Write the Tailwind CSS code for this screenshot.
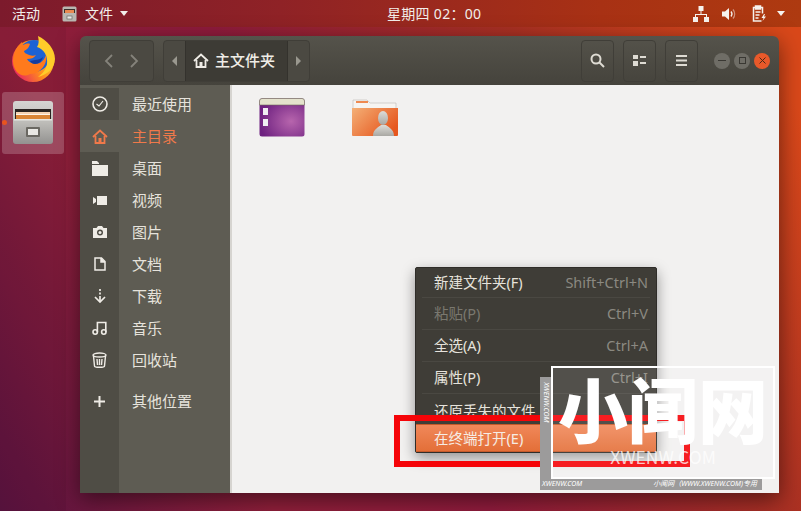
<!DOCTYPE html>
<html lang="zh-CN">

<head>
  <meta charset="UTF-8">
  <script src="https://cdn.jsdelivr.net/npm/@tailwindcss/browser@4"></script>
  <title>Files</title>
</head>

<body class="w-[801px] h-[511px] overflow-hidden relative font-['Noto_Sans','Noto_Sans_CJK_SC',sans-serif] bg-[linear-gradient(60deg,#5a1340_0%,#8f1f3a_25%,#8f1b3c_45%,#a93023_72%,#d9481a_94%)]">

  <!-- top bar -->
  <header class="h-[27px] flex items-center justify-between text-[14px] text-[#f2eeea] bg-[linear-gradient(90deg,#7c1a2c_0%,#8f2226_35%,#a83114_75%,#ae3a10_100%)]">
    <div class="flex items-center">
      <span class="ml-3">活动</span>
      <svg class="ml-[22px] w-[15px] h-[16px]" viewBox="0 0 15 16">
        <rect x="0.5" y="0.5" width="14" height="15" rx="1.5" fill="#b9b7b1" />
        <rect x="2" y="3" width="11" height="4" fill="#3a302c" />
        <rect x="3" y="4" width="9" height="3" fill="#e98a52" />
        <rect x="5" y="10" width="5" height="3" fill="#ecebe8" stroke="#6c6a66" stroke-width="0.7" />
      </svg>
      <span class="ml-[8px]">文件</span>
      <span class="ml-[7px] w-0 h-0 border-x-[4.5px] border-x-transparent border-t-[5px] border-t-[#f2eeea]"></span>
    </div>
    <div class="absolute left-[387px] top-[3px] tracking-[0.3px]">星期四 02：00</div>
    <div class="flex items-center mr-[16px]">
      <svg class="w-[16px] h-[16px]" viewBox="0 0 16 16" fill="#f6f2ee">
        <rect x="5.5" y="0" width="5" height="5" />
        <rect x="0" y="11" width="5" height="5" />
        <rect x="11" y="11" width="5" height="5" />
        <path d="M7.5 5h1v3h5.5v3h-1V9H3v2H2V8h5.5z" />
      </svg>
      <svg class="ml-[12px] w-[16px] h-[16px]" viewBox="0 0 16 16" fill="none" stroke="#f6f2ee">
        <path d="M1 5.5h3L8 2v12L4 10.500H1z" fill="#f6f2ee" stroke="none" />
        <path d="M10 5.500a4 4 0 0 1 0 5" stroke-width="1.300" />
        <path d="M12 3.500a7 7 0 0 1 0 9" stroke-width="1.300" stroke-opacity="0.5" />
      </svg>
      <svg class="ml-[15px] w-[15px] h-[17px]" viewBox="0 0 15 17" fill="none" stroke="#f6f2ee" stroke-width="1.500">
        <path d="M4 2.500H1.500v13.500h8" />
        <path d="M8 2.500h2.500v6" />
        <rect x="3.500" y="1" width="5" height="3" fill="#f6f2ee" />
        <path d="M3.500 7h5M3.500 10h4M3.500 13h3" />
        <path d="M12 9l-2.500 4h2l-1 3 3.500-4.500h-2l1-2.500z" fill="#f6f2ee" stroke="none" />
      </svg>
      <span class="ml-[10px] w-0 h-0 border-x-[4.5px] border-x-transparent border-t-[5px] border-t-[#f6f2ee]"></span>
    </div>
  </header>

  <!-- dock -->
  <aside class="absolute left-0 top-[27px] bottom-0 w-[66px] bg-black/5 flex flex-col items-center">
    <svg class="mt-[9px] w-[44px] h-[46px]" viewBox="0 0 44 46">
      <defs>
        <linearGradient id="fox" x1="0.95" y1="0.3" x2="0.1" y2="0.8">
          <stop offset="0" stop-color="#ffd02e" />
          <stop offset="0.5" stop-color="#ff8a1e" />
          <stop offset="1" stop-color="#e92c5c" />
        </linearGradient>
      </defs>
      <circle cx="22" cy="25" r="21" fill="url(#fox)" />
      <circle cx="23" cy="20" r="16" fill="#1d62d4" />
      <path d="M27 0c1 5 1 8-1 11 7 2 11 9 10 17-1 6-5 10-9 13 9-2 17-9 17-18C44 13 36 4 27 0z" fill="#ffcc2a" />
      <path d="M2 25C2 17 6 10 11 6l1 3c2-1 5-2 7-1-1 3-2 5-6 7 0 2 3 3 5 4 3 1 5 1 7 0-2 3-5 4-9 4 2 4 8 6 13 4 3-2 5-5 6-8 2 8-5 19-16 19C10 43 2 35 2 25z" fill="#ff7a1c" />
      <path d="M24 24c3 0 6-1 8-3-1 4-4 7-8 7-2 0-4-1-5-3 2 0 3-1 5-1z" fill="#153c9c" />
    </svg>
    <div class="relative mt-[10px] w-[62px] h-[62px] rounded-[3px] bg-white/20 flex items-center justify-center">
      <span class="absolute left-[0px] top-[28px] w-[5px] h-[5px] rounded-full bg-[#e9541f]"></span>
      <svg class="w-[42px] h-[44px]" viewBox="0 0 42 44">
        <defs>
          <linearGradient id="cab" x1="0" y1="0" x2="0" y2="1">
            <stop offset="0" stop-color="#d6d5d2" />
            <stop offset="0.5" stop-color="#bdbcb8" />
            <stop offset="1" stop-color="#939290" />
          </linearGradient>
        </defs>
        <rect x="1" y="0" width="40" height="43" rx="3" fill="url(#cab)" />
        <rect x="3" y="8" width="36" height="10" fill="#2a2421" />
        <rect x="4" y="11" width="34" height="2" fill="#f4d3b4" />
        <rect x="4" y="13" width="34" height="1" fill="#fff4e8" />
        <rect x="4" y="14" width="34" height="4" fill="#d98536" />
        <rect x="2" y="18" width="38" height="1.500" fill="#e6e5e2" />
        <rect x="14" y="26" width="14" height="10" rx="1" fill="#6a6862" />
        <rect x="16" y="28" width="10" height="6" fill="#e9e8e4" />
      </svg>
    </div>
  </aside>

  <!-- window -->
  <section class="absolute left-[80px] top-[36px] w-[699px] h-[457px] rounded-t-[6px] overflow-hidden shadow-[0_6px_22px_rgba(0,0,0,0.5)] flex flex-col">
    <div class="h-[49px] shrink-0 flex items-center pl-[9px] bg-[linear-gradient(#55534b,#45433c)]">
      <div class="h-[42px] w-[65px] rounded-[4px] border border-[#403e38] bg-[#4b4942] flex items-center justify-around px-[6px]">
        <svg class="w-[9px] h-[14px]" viewBox="0 0 9 14" fill="none" stroke="#85837b" stroke-width="1.800"><path d="M8 1L2 7l6 6" /></svg>
        <svg class="w-[9px] h-[14px]" viewBox="0 0 9 14" fill="none" stroke="#85837b" stroke-width="1.800"><path d="M1 1l6 6-6 6" /></svg>
      </div>
      <div class="ml-[9px] h-[42px] flex rounded-[4px] border border-[#403e38] bg-[#4b4942] overflow-hidden">
        <div class="w-[21px] flex items-center justify-center">
          <span class="w-0 h-0 border-y-[5px] border-y-transparent border-r-[5px] border-r-[#9a988f]"></span>
        </div>
        <div class="w-[103px] bg-[#3d3b35] border-x border-[#34322d] flex items-center text-[15px] text-[#efece6] pl-[7px]">
          <svg class="w-[16px] h-[15px] mr-[6px] shrink-0" viewBox="0 0 16 15" fill="none" stroke="#efece6" stroke-width="1.800">
            <path d="M1 8l7-6.500L15 8" />
            <path d="M3.500 7v7h9V7" />
            <rect x="6.500" y="9" width="3" height="5" fill="#efece6" stroke="none" />
          </svg>
          <span class="whitespace-nowrap font-medium">主文件夹</span>
        </div>
        <div class="w-[21px] flex items-center justify-center">
          <span class="w-0 h-0 border-y-[5px] border-y-transparent border-l-[5px] border-l-[#9a988f]"></span>
        </div>
      </div>
      <div class="ml-auto flex items-center">
        <div class="w-[33px] h-[42px] rounded-[4px] border border-[#403e38] flex items-center justify-center">
          <svg class="w-[15px] h-[15px]" viewBox="0 0 15 15" fill="none" stroke="#dedbd3" stroke-width="2"><circle cx="6" cy="6" r="4.500" /><path d="M9.500 9.500l4.500 4.500" /></svg>
        </div>
        <div class="ml-[9px] w-[33px] h-[42px] rounded-[4px] border border-[#403e38] flex items-center justify-center">
          <svg class="w-[13px] h-[11px]" viewBox="0 0 13 11" fill="#dedbd3"><rect width="5" height="4" /><rect y="6" width="5" height="5" /><rect x="7" y="1" width="6" height="2" /><rect x="7" y="7" width="6" height="2" /></svg>
        </div>
        <div class="ml-[9px] w-[33px] h-[42px] rounded-[4px] border border-[#403e38] flex items-center justify-center">
          <svg class="w-[11px] h-[11px]" viewBox="0 0 11 11" fill="#dedbd3"><rect width="11" height="2" /><rect y="4.500" width="11" height="2" /><rect y="9" width="11" height="2" /></svg>
        </div>
        <div class="ml-[16px] mr-[9px] flex gap-[4px]">
          <span class="w-[16px] h-[16px] rounded-full bg-[#6f6d66] flex items-center justify-center"><span class="w-[8px] h-[1px] bg-[#3a3833]"></span></span>
          <span class="w-[16px] h-[16px] rounded-full bg-[#6f6d66] flex items-center justify-center"><span class="w-[7px] h-[7px] border border-[#3a3833]"></span></span>
          <span class="w-[16px] h-[16px] rounded-full bg-[#e9592a] flex items-center justify-center">
            <svg class="w-[7px] h-[7px]" viewBox="0 0 7 7" stroke="#4a2a18" stroke-width="1"><path d="M0.500 0.500l6 6M6.500 0.500l-6 6" /></svg>
          </span>
        </div>
      </div>
    </div>

    <div class="flex-1 flex min-h-0">
      <!-- sidebar -->
      <nav class="w-[152px] shrink-0 bg-[#5e5c53] border-r-2 border-[#d6d4d0] text-[15px] text-[#e6e3dc] flex flex-col pt-[3px]">
        <div class="flex h-[32px] items-center"><div class="w-[39px] h-full bg-[#4f4d45] flex items-center justify-center">
          <svg class="w-[16px] h-[16px]" viewBox="0 0 16 16" fill="none" stroke="#efece6" stroke-width="1.600"><circle cx="8" cy="8" r="7" /><path d="M4.500 8l2.500 2 4-5" stroke-width="1.200" /></svg>
        </div><span class="ml-[13px]">最近使用</span></div>
        <div class="flex h-[32px] items-center text-[#f0794a]"><div class="w-[39px] h-full bg-[#5e5c53] flex items-center justify-center">
          <svg class="w-[16px] h-[15px]" viewBox="0 0 16 15" fill="none" stroke="#f0794a" stroke-width="1.800"><path d="M1 8l7-6.500L15 8" /><path d="M3.500 7v7h9V7" /><rect x="6.500" y="9" width="3" height="5" fill="#f0794a" stroke="none" /></svg>
        </div><span class="ml-[13px]">主目录</span></div>
        <div class="flex h-[32px] items-center"><div class="w-[39px] h-full bg-[#4f4d45] flex items-center justify-center">
          <svg class="w-[16px] h-[15px]" viewBox="0 0 16 15" fill="#efece6"><path d="M0 0h5l2 2v13H0z" /><path d="M1.500 4H16v11H1.500z" /><path d="M0 3h16v1H0z" fill="#4f4d45" /></svg>
        </div><span class="ml-[13px]">桌面</span></div>
        <div class="flex h-[32px] items-center"><div class="w-[39px] h-full bg-[#4f4d45] flex items-center justify-center">
          <svg class="w-[14px] h-[9px]" viewBox="0 0 14 9" fill="#efece6"><path d="M0 1l3 2v3L0 8z" /><rect x="4" width="10" height="9" /></svg>
        </div><span class="ml-[13px]">视频</span></div>
        <div class="flex h-[32px] items-center"><div class="w-[39px] h-full bg-[#4f4d45] flex items-center justify-center">
          <svg class="w-[14px] h-[12px]" viewBox="0 0 14 12" fill="#efece6"><path d="M0 2h3.500L5 0h4l1.500 2H14v10H0z" /><circle cx="7" cy="6.500" r="3" fill="#4f4d45" /><circle cx="7" cy="6.500" r="1.500" /></svg>
        </div><span class="ml-[13px]">图片</span></div>
        <div class="flex h-[32px] items-center"><div class="w-[39px] h-full bg-[#4f4d45] flex items-center justify-center">
          <svg class="w-[12px] h-[14px]" viewBox="0 0 12 14" fill="none" stroke="#efece6" stroke-width="1.500"><path d="M1 1h6.500L11 4.500V13H1z" fill="#4f4d45" /><path d="M7 1v4h4" fill="#efece6" /></svg>
        </div><span class="ml-[13px]">文档</span></div>
        <div class="flex h-[32px] items-center"><div class="w-[39px] h-full bg-[#4f4d45] flex items-center justify-center">
          <svg class="w-[12px] h-[14px]" viewBox="0 0 12 14" fill="none" stroke="#efece6" stroke-width="1.700"><path d="M6 0v2M6 3.500v2M6 7v5" /><path d="M1 8l5 5 5-5" /></svg>
        </div><span class="ml-[13px]">下载</span></div>
        <div class="flex h-[32px] items-center"><div class="w-[39px] h-full bg-[#4f4d45] flex items-center justify-center">
          <svg class="w-[15px] h-[14px]" viewBox="0 0 15 14" fill="none" stroke="#efece6" stroke-width="1.600"><circle cx="3.200" cy="11" r="2.200" /><circle cx="11.800" cy="11" r="2.200" /><path d="M5.400 11V1.500h8.400V11" /></svg>
        </div><span class="ml-[13px]">音乐</span></div>
        <div class="flex h-[32px] items-center"><div class="w-[39px] h-full bg-[#4f4d45] flex items-center justify-center">
          <svg class="w-[15px] h-[16px]" viewBox="0 0 15 16" fill="none" stroke="#efece6" stroke-width="1.400"><ellipse cx="7.500" cy="3" rx="6.500" ry="2" /><path d="M1.500 4l1 10c0 1 2 1.300 5 1.300s5-.3 5-1.300l1-10" /><path d="M5 7l.5 6M7.500 7v6M10 7l-.5 6" /></svg>
        </div><span class="ml-[13px]">回收站</span></div>
        <div class="flex flex-1 min-h-0"><div class="w-[39px] h-full bg-[#4f4d45] pt-[20px] flex justify-center">
          <svg class="w-[11px] h-[11px]" viewBox="0 0 11 11" fill="#efece6"><rect y="4.500" width="11" height="2" /><rect x="4.500" width="2" height="11" /></svg>
        </div><span class="ml-[13px] mt-[14px]">其他位置</span></div>
      </nav>

      <!-- files -->
      <main class="flex-1 bg-[#f2f1f0] flex items-start pl-[27px] pt-[13px] gap-[47px]">
        <svg class="w-[46px] h-[39px]" viewBox="0 0 46 39">
          <defs>
            <radialGradient id="desk" cx="0.7" cy="0.6" r="0.7">
              <stop offset="0" stop-color="#b765ad" />
              <stop offset="1" stop-color="#6e2180" />
            </radialGradient>
          </defs>
          <rect x="0.500" y="0.500" width="45" height="38" rx="2.500" fill="url(#desk)" />
          <path d="M0.500 7V3a2.500 2.500 0 0 1 2.500-2.500h40A2.500 2.500 0 0 1 45.500 3v4z" fill="#e4e2cc" stroke="#6e6b58" stroke-width="0.600" />
          <rect x="4" y="10" width="5" height="7" fill="#f0edf2" />
          <rect x="4" y="21" width="5" height="7" fill="#f0edf2" />
        </svg>
        <svg class="w-[46px] h-[39px]" viewBox="0 0 46 39">
          <defs>
            <linearGradient id="homefolder" x1="0" y1="0" x2="1" y2="0.600">
              <stop offset="0" stop-color="#f4b077" />
              <stop offset="1" stop-color="#e6571e" />
            </linearGradient>
            <linearGradient id="person" x1="0" y1="0" x2="0" y2="1">
              <stop offset="0" stop-color="#dddcd8" />
              <stop offset="1" stop-color="#a9a8a3" />
            </linearGradient>
          </defs>
          <path d="M1 2h14l3 3h26v7H1z" fill="#f6f4f1" stroke="#bdbbb6" stroke-width="0.600" />
          <rect x="4" y="3" width="12" height="2" fill="#ef8a50" />
          <path d="M0 10h46v27a1 1 0 0 1-1 1H1a1 1 0 0 1-1-1z" fill="url(#homefolder)" />
          <ellipse cx="31" cy="20" rx="5" ry="7" fill="url(#person)" />
          <path d="M21 38c0-7 6-9 8-11h5c2 2 8 4 8 11z" fill="url(#person)" />
        </svg>
      </main>
    </div>
  </section>

  <!-- context menu -->
  <div class="absolute left-[415px] top-[267px] w-[242px] h-[186px] bg-[#3f3d37] border border-[#2f2d29] rounded-[2px] shadow-[0_5px_14px_rgba(0,0,0,0.4)] text-[14.5px] text-[#e6e3dc]">
    <div class="h-[30px] mx-[6px] pl-[12px] pr-[2px] flex items-center justify-between border-b border-[#4a4842]"><span>新建文件夹(F)</span><span class="text-[#8b8981]">Shift+Ctrl+N</span></div>
    <div class="h-[32px] mx-[6px] pl-[12px] pr-[2px] pt-[1px] flex items-center justify-between border-b border-[#4a4842] text-[#7a786f]"><span>粘贴(P)</span><span class="text-[#8b8981]">Ctrl+V</span></div>
    <div class="h-[32px] mx-[6px] pl-[12px] pr-[2px] pt-[1px] flex items-center justify-between border-b border-[#4a4842]"><span>全选(A)</span><span class="text-[#8b8981]">Ctrl+A</span></div>
    <div class="h-[32px] mx-[6px] pl-[12px] pr-[2px] pt-[1px] flex items-center justify-between border-b border-[#4a4842]"><span>属性(P)</span><span class="text-[#8b8981]">Ctrl+I</span></div>
    <div class="h-[30px] mx-[6px] pl-[12px] pr-[2px] pt-[7px]"><span>还原丢失的文件</span></div>
    <div class="absolute left-0 right-0 bottom-0 h-[28px] pl-[18px] pt-[1px] flex items-center bg-[linear-gradient(#f0885a,#e36f38)] border-y border-[#c65a2a] text-[#f6ece4]">在终端打开(E)</div>
  </div>

  <!-- red annotation -->
  <div class="absolute left-[394px] top-[415px] w-[296px] h-[52px] border-[6px] border-[#f50408]"></div>

  <!-- watermark -->
  <div class="absolute left-[540px] top-[377px] w-[11px] h-[101px] bg-[#9c9b9b] overflow-hidden">
    <span class="absolute left-[-37px] top-[20px] w-[86px] rotate-90 text-[7px] italic text-white text-center whitespace-nowrap">XWENW.COM</span>
  </div>
  <div class="absolute left-[540px] top-[478px] w-[222px] h-[12px] bg-[#9c9b9b] flex items-center justify-between px-[2px] text-[7px] italic text-white whitespace-nowrap">
    <span>XWENW.COM</span>
    <span class="mr-[3px]">小闻网（WWW.XWENW.COM)专用</span>
  </div>
  <div class="absolute left-[551px] top-[366px] w-[224px] h-[113px] border-2 border-white bg-white/10 flex flex-col items-center font-['Noto_Sans_CJK_SC',sans-serif]">
    <span class="mt-[2px] text-[70px] leading-[76px] font-black text-white whitespace-nowrap">小闻网</span>
    <span class="mt-[-1px] text-[17.5px] leading-[24px] text-white/75 whitespace-nowrap">XWENW.COM</span>
  </div>
</body>

</html>
